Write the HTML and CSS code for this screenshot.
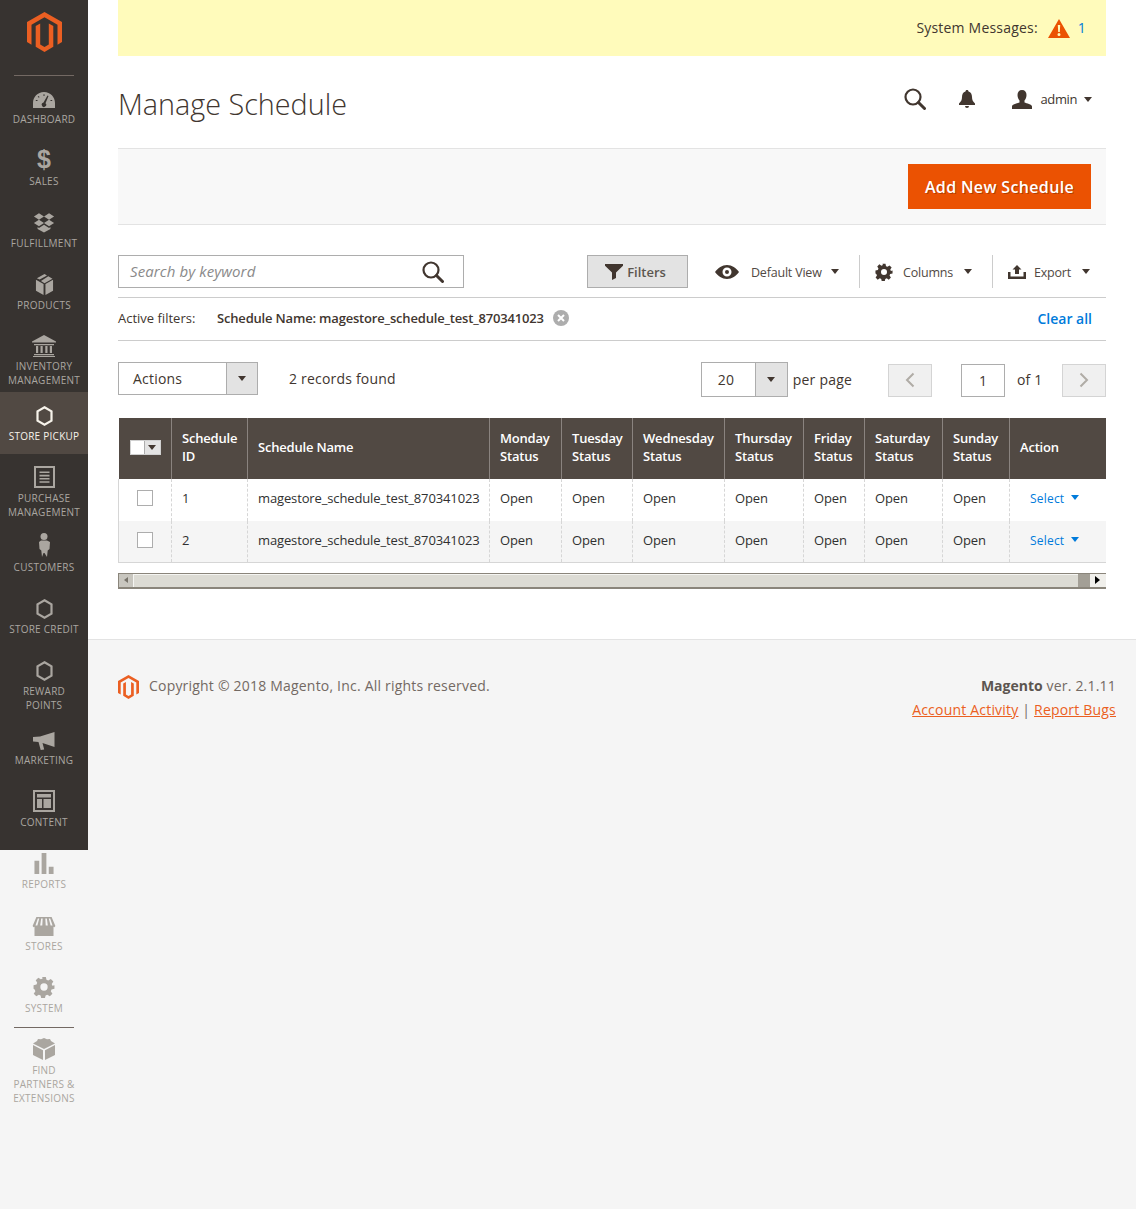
FILE: index.html
```html
<!DOCTYPE html>
<html lang="en">
<head>
    <meta charset="UTF-8">
    <title>Manage Schedule</title>
    <link rel="stylesheet" href="styles.css">
</head>
<body>
    <svg class="sprite" width="0" height="0">
        <symbol id="i-gear" viewBox="0 0 24 24"><path fill-rule="evenodd" d="M10 1h4l.7 3.200 1.900.8 2.800-1.800 2.800 2.800-1.800 2.800.8 1.900L23.400 10v4l-3.200.7-.8 1.900 1.800 2.800-2.800 2.800-2.800-1.800-1.900.8-.7 3.200h-4l-.7-3.200-1.900-.8-2.800 1.800-2.800-2.800 1.800-2.800-.8-1.900L.6 14v-4l3.200-.7.8-1.900L3 4.600 5.800 1.800l2.800 1.800 1.900-.8zM12 8a4 4 0 1 0 0 8 4 4 0 0 0 0-8z"/></symbol>
        <symbol id="i-search" viewBox="0 0 22 22"><circle cx="9" cy="9" r="7.500" fill="none" stroke="currentColor" stroke-width="2.200"/><path d="M14.500 14.500l6 6" fill="none" stroke="currentColor" stroke-width="3" stroke-linecap="round"/></symbol>
        <symbol id="i-hex" viewBox="0 0 17 20"><path d="M8.500 1.300l7 4v9.400l-7 4-7-4V5.300z" fill="none" stroke="currentColor" stroke-width="2.200"/></symbol>
    </svg>

    <div class="page">
        <nav class="sidebar">
            <a class="logo" href="#">
                <svg width="35" height="40" viewBox="0 0 35 40"><path fill="#eb5f22" d="M17.500 0L35 10v20l-4.500 2.700v-20l-13-7.500-13 7.500v20L0 30V10z"/><path fill="#eb5f22" d="M8.700 14l4.500-2.500v21l4.300 2.500 4.300-2.500v-21l4.500 2.500v20.700L17.500 40l-8.800-5.300z"/></svg>
            </a>
            <ul class="nav-list">
                <li class="nav-item">
                    <svg class="nav-icon" width="22" height="16" viewBox="0 0 22 16"><path fill-rule="evenodd" d="M11 0C4.500 0 0 5 0 11v5h22v-5C22 5 17.500 0 11 0zm4.500 4l-3 7.200a2.200 2.200 0 1 1-2-.6L14.500 3.500zM4.500 9H2.800V8h1.700zm1.400-3.200L4.700 4.700l.7-.7 1.200 1.100zM11.500 4h-1V2.200h1zM19.200 9h-1.700V8h1.700z"/></svg>
                    <span class="nav-label">Dashboard</span>
                </li>
                <li class="nav-item">
                    <span class="nav-dollar">$</span>
                    <span class="nav-label">Sales</span>
                </li>
                <li class="nav-item">
                    <svg class="nav-icon" width="22" height="21" viewBox="0 0 24 22"><path d="M6.500 1L12 4.500 6.500 8 1 4.500zM17.500 1L23 4.500 17.500 8 12 4.500zM6.500 8L12 11.500 6.500 15 1 11.500zM17.500 8L23 11.500 17.500 15 12 11.500zM5 16l1.500.9 5.500-3.400 5.500 3.400L19 16v2l-7 4-7-4z"/></svg>
                    <span class="nav-label">Fulfillment</span>
                </li>
                <li class="nav-item">
                    <svg class="nav-icon" width="19" height="21" viewBox="0 0 20 22"><path d="M10 0l2.600 1.500-7.700 4.300L2 4.400zM14 2.300L18.400 5 10 9.600 6.300 7.300zM1 6l8 4.600V22l-8-4.500zM19 6v11.500L11 22V10.600z"/></svg>
                    <span class="nav-label">Products</span>
                </li>
                <li class="nav-item nav-item-tight">
                    <svg class="nav-icon" width="24" height="22" viewBox="0 0 24 22"><path d="M12 0l12 6.500v1H0v-1zM2 9h20v1.200H2zM4 11h2.200v7H4zM8.500 11h2.200v7H8.500zM13.300 11h2.200v7h-2.200zM17.800 11H20v7h-2.200zM2 19h20v1.200H2zM1 21h22v1H1z"/></svg>
                    <span class="nav-label">Inventory Management</span>
                </li>
                <li class="nav-item active">
                    <svg class="nav-icon" width="17" height="20"><use href="#i-hex"/></svg>
                    <span class="nav-label">Store Pickup</span>
                </li>
                <li class="nav-item">
                    <svg class="nav-icon" width="21" height="22" viewBox="0 0 21 22"><path fill-rule="evenodd" d="M0 0h21v22H0zm2 2v18h17V2zM5.500 5.500h10v1.600h-10zM5.500 8.800h10v1.600h-10zM5.500 12h10v1.600h-10zM5.500 15.200h10v1.600h-10z"/></svg>
                    <span class="nav-label">Purchase Management</span>
                </li>
                <li class="nav-item">
                    <svg class="nav-icon" width="12" height="24" viewBox="0 0 12 24"><circle cx="6" cy="3.500" r="3.500"/><path d="M3 7.500h6l3 1.500-.5 7-1.800 1.500-.7 6.500L6.500 20h-1L4 24l-.7-6.500L1.500 16 1 9z"/></svg>
                    <span class="nav-label">Customers</span>
                </li>
                <li class="nav-item">
                    <svg class="nav-icon" width="17" height="20"><use href="#i-hex"/></svg>
                    <span class="nav-label">Store Credit</span>
                </li>
                <li class="nav-item">
                    <svg class="nav-icon" width="17" height="20"><use href="#i-hex"/></svg>
                    <span class="nav-label">Reward Points</span>
                </li>
                <li class="nav-item">
                    <svg class="nav-icon" width="22" height="18" viewBox="0 0 22 18"><path d="M0 5l7-.5L21.500 0v15L9.500 11l1.700 6.500-3.500.5L5.500 10 0 9.500z"/></svg>
                    <span class="nav-label">Marketing</span>
                </li>
                <li class="nav-item">
                    <svg class="nav-icon" width="22" height="22" viewBox="0 0 22 22"><path fill-rule="evenodd" d="M0 0h22v22H0zm2 2v18h18V2zM4 4h14v3.500H4zM4 9h5v9H4zM10.500 9H18v9h-7.500z"/></svg>
                    <span class="nav-label">Content</span>
                </li>
                <li class="nav-item">
                    <svg class="nav-icon" width="20" height="21" viewBox="0 0 20 22"><path d="M0 8h5v14H0zM7.500 0h5v22h-5zM15 14.500h5V22h-5z"/></svg>
                    <span class="nav-label">Reports</span>
                </li>
                <li class="nav-item">
                    <svg class="nav-icon" width="24" height="19" viewBox="0 0 24 20"><path fill-rule="evenodd" d="M4 0h16l4 9.500-1 1.200-1-.4V20H2v-9.700l-1 .4-1-1.200zM5.500 1.500L3 9h2l2-7.500zM9 1.500L8 9h2.200l.4-7.500zM13.400 1.500l.4 7.500H16l-1-7.500zM17 1.500L19 9h2l-2.500-7.500z"/></svg>
                    <span class="nav-label">Stores</span>
                </li>
                <li class="nav-item">
                    <svg class="nav-icon" width="22" height="22"><use href="#i-gear"/></svg>
                    <span class="nav-label">System</span>
                </li>
                <li class="nav-item nav-item-extra">
                    <svg class="nav-icon" width="22" height="22" viewBox="0 0 22 22"><path d="M11 0l3 1.200 3-.2 1 2 4 2.500L11 11 0 5.500 4 3l1-2 3 .2zM0 7l10 5.200V22L0 17zM22 7v10l-10 5v-9.800z"/></svg>
                    <span class="nav-label">Find Partners &amp; Extensions</span>
                </li>
            </ul>
        </nav>

        <div class="main">
            <div class="content">
                <div class="sys-msg">
                    <span>System Messages:</span>
                    <svg class="sys-icon" width="22" height="19" viewBox="0 0 22 19"><path fill-rule="evenodd" fill="#eb5202" d="M11 0l11 19H0zM9.800 6l.4 7h1.600l.4-7zM11 14a1.500 1.500 0 1 0 0 3 1.500 1.500 0 0 0 0-3z"/></svg>
                    <a class="link sys-count" href="#">1</a>
                </div>

                <div class="page-head">
                    <h1>Manage Schedule</h1>
                    <div class="head-tools">
                        <svg class="tool-search" width="22" height="22"><use href="#i-search"/></svg>
                        <svg class="tool-bell" width="16" height="18" viewBox="0 0 16 18"><path d="M8 0c1 0 1.500.6 1.500 1.500C12 2.200 13 4.500 13 7c0 3 1 4.500 3 6.500V15H0v-1.500C2 11.500 3 10 3 7c0-2.500 1-4.800 3.500-5.500C6.500.6 7 0 8 0zM6 16h4a2 2 0 0 1-4 0z"/></svg>
                        <div class="tool-user">
                            <svg width="20" height="19" viewBox="0 0 20 19"><path d="M10 0c3 0 4.500 2 4.500 5 0 2.500-1 4.500-2 5.500v2c2 1 7.500 1.500 7.500 4V19H0v-2.500c0-2.500 5.500-3 7.500-4v-2c-1-1-2-3-2-5.500 0-3 1.500-5 4.500-5z"/></svg>
                            <span>admin</span>
                            <i class="caret"></i>
                        </div>
                    </div>
                </div>

                <div class="page-actions">
                    <button class="btn-primary">Add New Schedule</button>
                </div>

                <div class="grid-tools">
                    <div class="search-box">
                        <span>Search by keyword</span>
                        <svg width="22" height="22"><use href="#i-search"/></svg>
                    </div>
                    <div class="tool-buttons">
                        <div class="btn-filters">
                            <svg width="18" height="16" viewBox="0 0 18 16"><path d="M0 0h18v1.800L11 8.500V14l-4 2V8.500L0 1.800z"/></svg>
                            <span>Filters</span>
                        </div>
                        <div class="tool-drop tool-view">
                            <svg width="24" height="14" viewBox="0 0 24 14"><path fill-rule="evenodd" d="M12 0c5 0 9 3 12 7-3 4-7 7-12 7S3 11 0 7c3-4 7-7 12-7zm0 2.500a4.500 4.500 0 1 0 0 9 4.500 4.500 0 0 0 0-9zM12 5a2 2 0 1 1 0 4 2 2 0 0 1 0-4z"/></svg>
                            <span>Default View</span>
                            <i class="caret"></i>
                        </div>
                        <div class="tool-drop tool-columns">
                            <svg width="18" height="18"><use href="#i-gear"/></svg>
                            <span>Columns</span>
                            <i class="caret"></i>
                        </div>
                        <div class="tool-drop tool-export">
                            <svg width="18" height="14" viewBox="0 0 18 14"><path d="M9 0l4.500 4.500H11V9H7V4.500H4.500zM0 7h2.500v4.500h13V7H18v7H0z"/></svg>
                            <span>Export</span>
                            <i class="caret"></i>
                        </div>
                    </div>
                </div>

                <div class="active-filters">
                    <span class="af-label">Active filters:</span>
                    <strong>Schedule Name: magestore_schedule_test_870341023</strong>
                    <svg class="af-remove" width="16" height="16" viewBox="0 0 16 16"><circle cx="8" cy="8" r="8" fill="#adadad"/><path d="M5 5l6 6M11 5l-6 6" stroke="#fff" stroke-width="2"/></svg>
                    <a class="link clear-all" href="#">Clear all</a>
                </div>

                <div class="pager-row">
                    <div class="select-box select-actions">
                        <span class="select-value">Actions</span>
                        <span class="select-arrow"><i class="caret"></i></span>
                    </div>
                    <span class="records">2 records found</span>
                    <div class="select-box select-size">
                        <span class="select-value">20</span>
                        <span class="select-arrow"><i class="caret"></i></span>
                    </div>
                    <span class="per-page">per page</span>
                    <span class="page-btn page-prev"><svg width="10" height="16" viewBox="0 0 10 16"><path d="M8.500 1.500L2 8l6.500 6.500" fill="none" stroke="#b0aca6" stroke-width="2"/></svg></span>
                    <span class="page-input">1</span>
                    <span class="page-of">of 1</span>
                    <span class="page-btn"><svg width="10" height="16" viewBox="0 0 10 16"><path d="M1.500 1.500L8 8l-6.500 6.500" fill="none" stroke="#b0aca6" stroke-width="2"/></svg></span>
                </div>

                <table class="grid">
                    <colgroup>
                        <col class="col-check"><col class="col-id"><col class="col-name"><col class="col-mon"><col class="col-tue"><col class="col-wed"><col class="col-thu"><col class="col-fri"><col class="col-sat"><col class="col-sun"><col>
                    </colgroup>
                    <thead>
                        <tr>
                            <th><div class="mass-select"><span class="mass-box"></span><span class="mass-arrow"><i class="caret"></i></span></div></th>
                            <th>Schedule ID</th>
                            <th>Schedule Name</th>
                            <th>Monday Status</th>
                            <th>Tuesday Status</th>
                            <th>Wednesday Status</th>
                            <th>Thursday Status</th>
                            <th>Friday Status</th>
                            <th>Saturday Status</th>
                            <th>Sunday Status</th>
                            <th>Action</th>
                        </tr>
                    </thead>
                    <tbody>
                        <tr>
                            <td><span class="check"></span></td>
                            <td>1</td>
                            <td>magestore_schedule_test_870341023</td>
                            <td>Open</td><td>Open</td><td>Open</td><td>Open</td><td>Open</td><td>Open</td><td>Open</td>
                            <td class="cell-action"><a class="link" href="#">Select</a><i class="caret caret-blue"></i></td>
                        </tr>
                        <tr>
                            <td><span class="check"></span></td>
                            <td>2</td>
                            <td>magestore_schedule_test_870341023</td>
                            <td>Open</td><td>Open</td><td>Open</td><td>Open</td><td>Open</td><td>Open</td><td>Open</td>
                            <td class="cell-action"><a class="link" href="#">Select</a><i class="caret caret-blue"></i></td>
                        </tr>
                    </tbody>
                </table>

                <div class="scrollbar">
                    <span class="sb-btn"><i class="sb-arrow-left"></i></span>
                    <span class="sb-thumb"></span>
                    <span class="sb-track"></span>
                    <span class="sb-btn sb-btn-right"><i class="sb-arrow-right"></i></span>
                </div>
            </div>

            <footer class="footer">
                <div class="copyright">
                    <svg width="21" height="24" viewBox="0 0 35 40"><path fill="#eb5f22" d="M17.500 0L35 10v20l-4.500 2.700v-20l-13-7.500-13 7.500v20L0 30V10z"/><path fill="#eb5f22" d="M8.700 14l4.500-2.500v21l4.300 2.500 4.300-2.500v-21l4.500 2.500v20.700L17.500 40l-8.800-5.300z"/></svg>
                    <span>Copyright © 2018 Magento, Inc. All rights reserved.</span>
                </div>
                <div class="legal">
                    <p><strong>Magento</strong> ver. 2.1.11</p>
                    <p><a href="#">Account Activity</a> | <a href="#">Report Bugs</a></p>
                </div>
            </footer>
        </div>
    </div>
</body>
</html>
```

FILE: styles.css
```css
body { margin: 0; background-color: #f5f5f5; color: #41362f; font-family: "Open Sans", sans-serif; font-size: 14px; letter-spacing: 0.2px; }
a { text-decoration: none; }
i { display: inline-block; }
.sprite { position: absolute; }
.page { display: flex; align-items: flex-start; min-height: 1209px; }
.link { color: #007bdb; }
.caret { width: 0; height: 0; border-style: solid; border-width: 5px 4.500px 0; border-color: #41362f transparent transparent; }

/* Sidebar */
.sidebar { flex: none; width: 88px; height: 850px; background-color: #373330; }
.logo { display: block; height: 75px; padding-top: 12px; box-sizing: border-box; }
.logo svg { display: block; margin: 0 auto; }
.nav-list { list-style: none; padding: 0; border-top: 1px solid #736963; margin: 0 14px; }
.nav-item { display: grid; grid-template-rows: 34px auto; row-gap: 3px; justify-items: center; position: relative; margin: 0 -14px; min-height: 62px; padding-bottom: 4px; box-sizing: border-box; text-align: center; color: #aaa6a0; fill: #aaa6a0; }
.nav-item:first-child { margin-top: -1px; }
.nav-item:first-child .nav-icon { margin-bottom: 1px; }
.nav-item-tight { min-height: 69px; }
.nav-item-tight .nav-label { line-height: 13.500px; }
.nav-item.active { background-color: #514943; color: #f7f3eb; fill: #f7f3eb; }
.nav-item-extra { margin-top: 2px; grid-template-rows: 32px auto; }
.nav-item-extra .nav-label { padding: 0 10px; }
.nav-item-extra::before { content: ""; position: absolute; left: 14px; right: 14px; top: -1px; border-top: 1px solid #736963; }
.nav-icon { align-self: end; display: block; }
.nav-dollar { align-self: end; font-family: "Liberation Sans", sans-serif; font-weight: bold; font-size: 25px; line-height: 26px; letter-spacing: 0; height: 25px; }
.nav-label { display: block; padding: 0 5px; font-size: 10px; line-height: 14px; letter-spacing: 0.25px; text-transform: uppercase; }

/* Main column */
.main { flex: 1; min-width: 0; display: flex; flex-direction: column; align-self: stretch; }
.content { background-color: #fff; padding: 0 30px 50px; }
.sys-msg { display: flex; align-items: center; justify-content: flex-end; height: 56px; padding: 0 20px 2px 0; box-sizing: border-box; background-color: #fffbbb; }
.sys-icon { margin: 2px 0 0 10px; }
.sys-count { margin-left: 8px; }

.page-head { display: flex; justify-content: space-between; height: 93px; box-sizing: border-box; border-bottom: 1px solid #e3e3e3; }
.page-head h1 { margin: 27px 0 0; font-size: 28.750px; line-height: 42px; font-weight: 300; letter-spacing: 0; color: #41362f; }
.head-tools { display: flex; align-items: center; height: 86px; color: #41362f; fill: #41362f; padding-right: 14px; }
.tool-bell { margin-left: 33px; }
.tool-user { display: flex; align-items: center; margin-left: 37px; font-size: 13px; letter-spacing: -0.4px; }
.tool-user span { margin: 0 7px 0 9px; }

.page-actions { display: flex; justify-content: flex-end; padding: 15px; height: 76px; box-sizing: border-box; background-color: #f8f8f8; border-bottom: 1px solid #e3e3e3; }
.btn-primary { width: 183px; height: 45px; border: 0; background-color: #eb5202; color: #fff; font-family: "Open Sans", sans-serif; font-size: 16px; font-weight: 600; letter-spacing: 0.35px; text-shadow: 1px 1px 0 rgba(0,0,0,0.25); }

.grid-tools { display: flex; justify-content: space-between; height: 73px; padding-top: 30px; box-sizing: border-box; border-bottom: 1px solid #ccc; }
.search-box { display: flex; justify-content: space-between; align-items: center; width: 346px; height: 33px; padding: 0 19px 0 11px; box-sizing: border-box; border: 1px solid #adadad; color: #8a8a8a; font-size: 15px; font-style: italic; letter-spacing: 0.1px; }
.search-box span { margin-bottom: 2px; }
.search-box svg { color: #41362f; }
.tool-buttons { display: flex; align-items: flex-start; font-size: 12.500px; fill: #41362f; color: #514943; letter-spacing: -0.2px; }
.btn-filters { display: flex; align-items: center; justify-content: center; gap: 4px; width: 101px; height: 33px; padding-right: 4px; box-sizing: border-box; border: 1px solid #adadad; background-color: #e3e3e3; font-size: 13px; font-weight: 600; letter-spacing: 0; color: #5c5650; }
.tool-drop { display: flex; align-items: center; height: 33px; }
.tool-drop span { padding-top: 2px; }
.tool-drop .caret { margin-left: 9px; }
.tool-view { margin-left: 27px; width: 145px; box-sizing: border-box; border-right: 1px solid #ccc; }
.tool-view span { margin-left: 12px; }
.tool-columns { width: 133px; padding-left: 15px; box-sizing: border-box; border-right: 1px solid #ccc; }
.tool-columns span { margin-left: 10px; }
.tool-columns .caret { margin-left: 11px; }
.tool-export { padding: 0 15px; width: 113px; box-sizing: border-box; }
.tool-export span { margin-left: 8px; }
.tool-export .caret { margin-left: 11px; }

.active-filters { display: flex; align-items: center; height: 43px; box-sizing: border-box; border-bottom: 1px solid #ccc; font-size: 13px; letter-spacing: 0; padding: 0 14px 2px 0; }
.af-label { width: 99px; }
.active-filters strong { font-weight: 600; letter-spacing: -0.18px; }
.af-remove { margin-left: 9px; }
.clear-all { margin-left: auto; font-size: 14px; font-weight: 600; }

.pager-row { display: flex; align-items: center; height: 77px; padding-bottom: 2px; box-sizing: border-box; }
.select-box { display: flex; height: 33px; box-sizing: border-box; border: 1px solid #adadad; }
.select-value { flex: 1; line-height: 31px; }
.select-arrow { display: flex; align-items: center; justify-content: center; width: 31px; border-left: 1px solid #adadad; background-color: #e3e3e3; }
.select-actions { width: 140px; }
.select-actions .select-value { padding-left: 14px; }
.select-actions .select-arrow { width: 30px; }
.records { margin-left: 31px; }
.select-size { width: 87px; height: 35px; margin: 2px 0 0 auto; }
.select-size .select-value { padding-left: 16px; line-height: 33px; }
.per-page { margin: 2px 36px 0 5px; }
.page-btn { display: flex; align-items: center; justify-content: center; width: 44px; height: 33px; margin-top: 4px; padding-bottom: 2px; box-sizing: border-box; border: 1px solid #d4d4d4; background-color: #f0f0f0; }
.page-input { width: 44px; height: 33px; margin: 4px 0 0 29px; box-sizing: border-box; border: 1px solid #adadad; text-align: center; line-height: 31px; }
.page-of { width: 45px; margin: 2px 0 0 12px; }

/* Grid */
.grid { width: 988px; border-collapse: collapse; table-layout: fixed; font-size: 13px; letter-spacing: -0.13px; }
.col-check { width: 53px; }
.col-id { width: 76px; }
.col-name { width: 242px; }
.col-mon { width: 72px; }
.col-tue { width: 71px; }
.col-wed { width: 92px; }
.col-thu { width: 79px; }
.col-fri { width: 61px; }
.col-sat { width: 78px; }
.col-sun { width: 67px; }
.grid th { height: 61px; padding: 0 9px 4px 10px; box-sizing: border-box; background-color: #514943; color: #fff; font-weight: 600; letter-spacing: -0.2px; line-height: 18px; text-align: left; border-left: 1px solid #8a837f; }
.grid th:first-child { border-left: 0; padding-bottom: 2px; }
.grid td { height: 42px; padding: 0 9px 4px 10px; box-sizing: border-box; border-left: 1px dashed #d6d6d6; color: #303030; white-space: nowrap; }
.grid td:first-child { border-left: 1px solid #d6d6d6; text-align: center; padding: 0 0 4px 0; }
.grid tbody tr:nth-child(even) td { height: 41px; padding-bottom: 3px; background-color: #f5f5f5; border-bottom: 1px solid #d6d6d6; }
.grid tbody tr:nth-child(even) td.cell-action { padding-bottom: 2px; }
.mass-select { display: flex; width: 31px; height: 15px; background-color: #fff; box-sizing: border-box; border: 1px solid #d0d0d0; margin-left: 1px; }
.mass-box { flex: 1; }
.mass-arrow { display: flex; align-items: center; justify-content: center; width: 15px; background-color: #e3e3e3; border-left: 1px solid #adadad; }
.check { display: block; width: 16px; height: 16px; margin: 0 auto; box-sizing: border-box; border: 1px solid #adadad; background-color: #fff; }
.grid td.cell-action { padding-left: 20px; font-size: 12px; letter-spacing: 0.2px; }
.caret-blue { margin: 0 0 3px 7px; border-top-color: #007bdb; }

/* fake horizontal scrollbar of the grid wrapper */
.scrollbar { display: flex; height: 16px; margin-top: 10px; width: 988px; box-sizing: border-box; border-top: 1px solid #8a857b; border-left: 1px solid #8a857b; border-bottom: 2px solid #8a857b; background-color: #a39f96; }
.sb-btn { display: flex; align-items: center; justify-content: center; width: 14px; background-color: #c8c6bf; }
.sb-btn-right { background-color: #f0efeb; border-right: 2px solid #f0efeb; }
.sb-thumb { flex: 1; background-color: #dcdbd4; border-left: 1px solid #f5f5f2; border-top: 1px solid #f5f5f2; }
.sb-track { width: 12px; }
.sb-arrow-left { border-style: solid; border-width: 3px 4px 3px 0; border-color: transparent #77736a transparent transparent; }
.sb-arrow-right { border-style: solid; border-width: 4px 0 4px 5px; border-color: transparent transparent transparent #000; }

/* Footer */
.footer { flex: 1; display: flex; justify-content: space-between; padding: 30px 20px 0 30px; border-top: 1px solid #e3e3e3; background-color: #f5f5f5; color: #736963; }
.copyright { display: flex; align-items: flex-start; gap: 10px; line-height: 24px; height: 24px; }
.copyright svg { margin-top: 5px; }
.copyright span { margin-top: 4px; }
.legal { text-align: right; line-height: 24px; margin-top: 4px; }
.legal p { margin: 0; }
.legal strong { font-weight: 700; color: #5c5550; letter-spacing: 0; }
.legal a { color: #eb5f22; text-decoration: underline; }
```
